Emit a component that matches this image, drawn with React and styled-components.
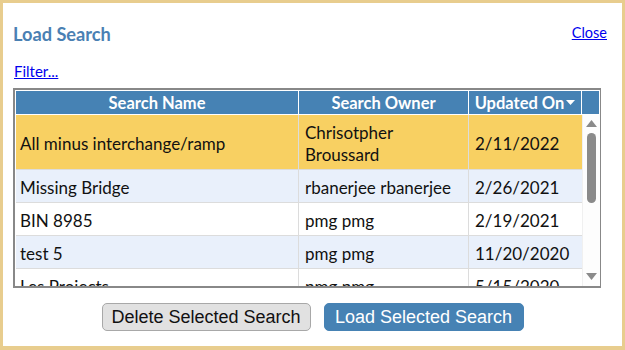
import React from "react";
import styled, { createGlobalStyle } from "styled-components";

const Global = createGlobalStyle`
  html, body { margin: 0; padding: 0; background: #fff; }
  body { width: 625px; height: 350px; overflow: hidden; }
`;

const Frame = styled.div`
  box-sizing: border-box;
  width: 625px;
  height: 350px;
  border: 3px solid #e8cd8e;
  border-bottom-width: 4px;
  background: #fff;
  padding: 0 15px 0 10px;
  display: flex;
  flex-direction: column;
  font-family: Lato, "Open Sans", sans-serif;
`;

const TopBar = styled.div`
  display: flex;
  justify-content: space-between;
  align-items: flex-start;
  height: 60px;
`;

const Title = styled.h2`
  margin: 20px 0 0 0;
  font-size: 18.2px;
  font-weight: 700;
  color: #4a80b3;
`;

const Link = styled.a`
  color: #0000ee;
  text-decoration: underline;
  font-size: ${p => p.$size || 14}px;
  cursor: pointer;
  margin-top: ${p => p.$top || 0}px;
`;

const FilterRow = styled.div`
  height: 25px;
  display: flex;
  align-items: flex-start;
  padding-left: 1px;
  margin-top: -1px;
  margin-bottom: 1px;
`;

const TableBox = styled.div`
  width: 584px;
  border: 2px solid #888;
  border-right-width: 1px;
  padding: 0 0 0 1px;
  display: flex;
  flex-direction: column;
`;

const HeadRow = styled.div`
  display: grid;
  grid-template-columns: 283px 170px 113px 17px;
  height: 25px;
`;

const HeadCell = styled.div`
  background: #4682b4;
  color: #fff;
  font-weight: 700;
  font-size: 16.5px;
  display: flex;
  align-items: center;
  justify-content: center;
  border-right: 1px solid #fff;
  border-bottom: 1px solid #fff;
  border-top: 1px solid #fff;
  box-sizing: border-box;
  gap: 2px;
  &:last-child { border-right: none; }
`;

const BodyArea = styled.div`
  display: grid;
  grid-template-columns: 566px 18px;
  height: 171px;
  overflow: hidden;
`;

const Rows = styled.div`
  display: flex;
  flex-direction: column;
  overflow: hidden;
`;

const Row = styled.div`
  display: grid;
  grid-template-columns: 283px 170px 113px;
  flex: 0 0 auto;
  height: ${p => p.$h}px;
  background: ${p => (p.$selected ? "#f8d062" : p.$alt ? "#e9f0fb" : "#ffffff")};
`;

const Cell = styled.div`
  box-sizing: border-box;
  border-right: 1px solid #dcdcdc;
  border-bottom: 1px solid #dcdcdc;
  padding: 3px 6px 0 ${p => p.$pl || 6}px;
  display: flex;
  align-items: center;
  font-size: 17px;
  line-height: 22px;
  color: #111;
  overflow: hidden;
  &:last-child { border-right: none; }
`;

const ScrollTrack = styled.div`
  position: relative;
  background: #fdfdfd;
  border-left: 1px solid #f0f0f0;
`;

const Thumb = styled.div`
  position: absolute;
  left: 4px;
  width: 9px;
  top: 18px;
  height: 70px;
  border-radius: 5px;
  background: #8a8a8a;
`;

const Arrow = styled.svg`
  position: absolute;
  left: 3px;
  ${p => (p.$down ? "bottom: 6px;" : "top: 5px;")}
`;

const Buttons = styled.div`
  display: flex;
  justify-content: center;
  gap: 13px;
  margin-top: 15px;
  padding-left: 5px;
`;

const Button = styled.button`
  font-family: "Liberation Sans", Arial, sans-serif;
  font-size: 18px;
  height: 28px;
  width: ${p => p.$w}px;
  padding: 0;
  border-radius: 5px;
  cursor: pointer;
  border: 1px solid ${p => (p.$primary ? "#4682b4" : "#a8a8a8")};
  background: ${p => (p.$primary ? "#4682b4" : "#e1e1e1")};
  color: ${p => (p.$primary ? "#fff" : "#111")};
`;

const rows = [
  { name: "All minus interchange/ramp", owner: "Chrisotpher Broussard", date: "2/11/2022", h: 55, selected: true },
  { name: "Missing Bridge", owner: "rbanerjee rbanerjee", date: "2/26/2021", h: 33, alt: true },
  { name: "BIN 8985", owner: "pmg pmg", date: "2/19/2021", h: 33 },
  { name: "test 5", owner: "pmg pmg", date: "11/20/2020", h: 33, alt: true },
  { name: "Les Projects", owner: "pmg pmg", date: "5/15/2020", h: 33 },
];

export default function App() {
  return (
    <>
      <Global />
      <Frame>
        <TopBar>
          <Title>Load Search</Title>
          <Link $size={14.5} $top={21}>Close</Link>
        </TopBar>
        <FilterRow>
          <Link $size={15}>Filter...</Link>
        </FilterRow>
        <TableBox>
          <HeadRow>
            <HeadCell>Search Name</HeadCell>
            <HeadCell>Search Owner</HeadCell>
            <HeadCell>
              Updated On
              <svg width="9" height="5" viewBox="0 0 9 5">
                <path d="M0 0 L9 0 L4.5 5 Z" fill="#fff" />
              </svg>
            </HeadCell>
            <HeadCell />
          </HeadRow>
          <BodyArea>
            <Rows>
              {rows.map((r, i) => (
                <Row key={i} $h={r.h} $selected={r.selected} $alt={r.alt}>
                  <Cell $pl={4}>{r.name}</Cell>
                  <Cell>{r.owner}</Cell>
                  <Cell>{r.date}</Cell>
                </Row>
              ))}
            </Rows>
            <ScrollTrack>
              <Arrow width="11" height="7" viewBox="0 0 11 7">
                <path d="M0 7 L5.5 0 L11 7 Z" fill="#8a8a8a" />
              </Arrow>
              <Thumb />
              <Arrow $down width="11" height="7" viewBox="0 0 11 7">
                <path d="M0 0 L11 0 L5.5 7 Z" fill="#8a8a8a" />
              </Arrow>
            </ScrollTrack>
          </BodyArea>
        </TableBox>
        <Buttons>
          <Button $w={209}>Delete Selected Search</Button>
          <Button $w={200} $primary>Load Selected Search</Button>
        </Buttons>
      </Frame>
    </>
  );
}
